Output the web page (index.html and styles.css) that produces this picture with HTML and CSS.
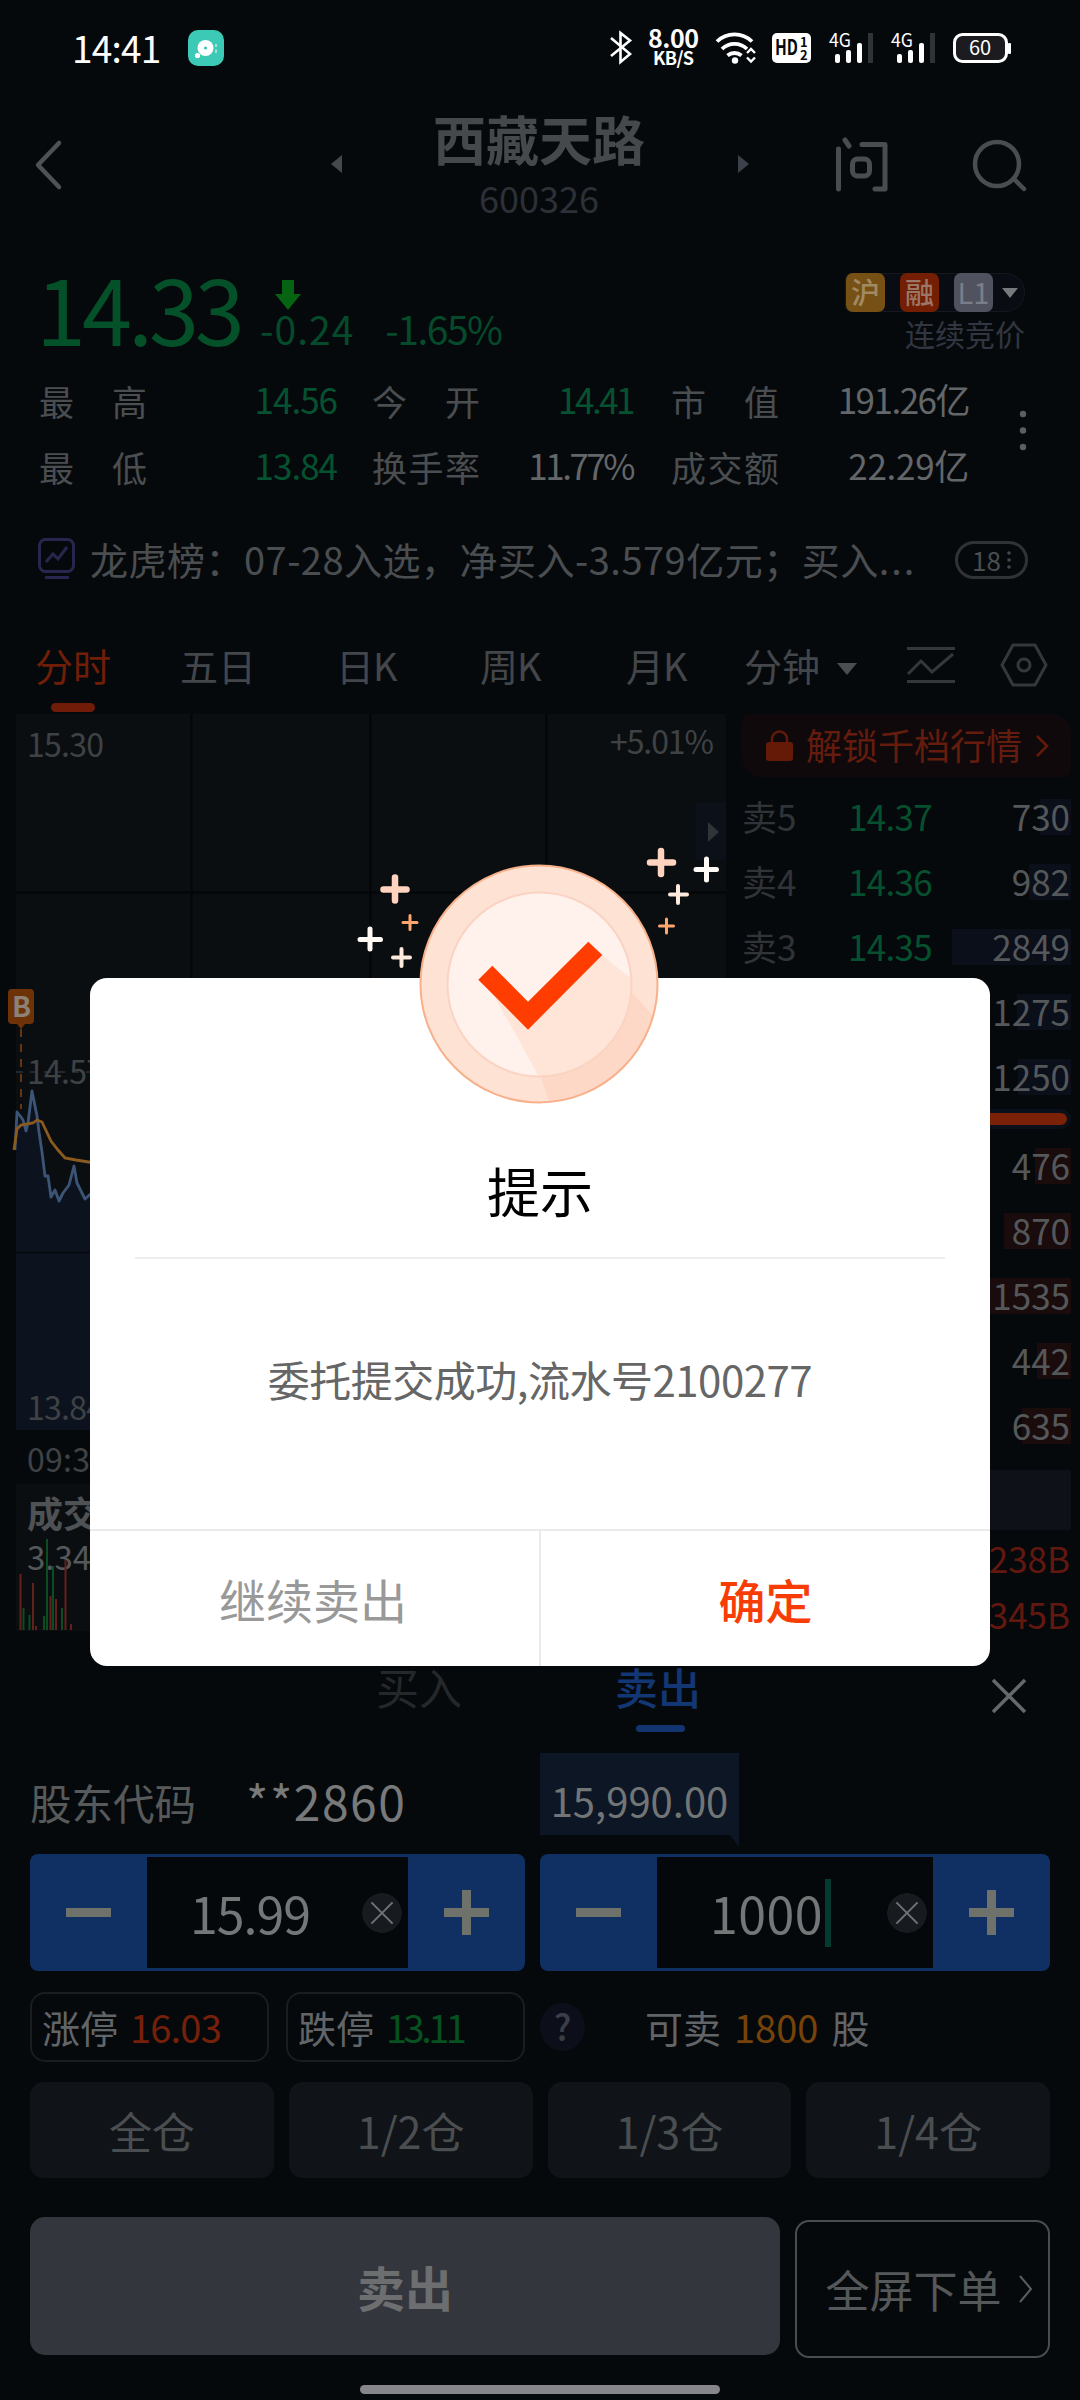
FILE: index.html
```html
<!DOCTYPE html>
<html lang="zh-CN">
<head>
<meta charset="utf-8">
<title>西藏天路 600326</title>
<link rel="stylesheet" href="styles.css">
</head>
<body>
<div class="screen">
  <header class="status">
    <div class="status-left">
      <span class="clock">14:41</span>
      <svg width="36" height="36" viewBox="0 0 36 36"><rect width="36" height="36" rx="10" fill="#3cc9b5"/><circle cx="17.500" cy="18" r="8" fill="#fff"/><circle cx="17.500" cy="18" r="1.600" fill="#3cc9b5"/><circle cx="9.500" cy="25.500" r="2.600" fill="#fff"/><path d="M28 14v3M28 19.500v3.500" stroke="#bff0e8" stroke-width="1.500"/></svg>
    </div>
    <svg class="status-icons" width="424" height="50" viewBox="0 0 424 50">
      <g fill="none" stroke="#fff" stroke-width="2.600"><path d="M3 14 22 30 12.500 38V9L22 16.500 3 32"/></g>
      <g fill="#fff">
        <text x="40" y="24" font-size="25" textLength="51" class="bold">8.00</text>
        <text x="45" y="41" font-size="18" textLength="41" class="bold">KB/S</text>
      </g>
      <g fill="none" stroke="#fff" stroke-width="3.800"><path d="M109 17.500a25 25 0 0 1 35 0"/><path d="M114 25a18 18 0 0 1 25 0"/><path d="M119.500 31.500a11 11 0 0 1 14 0"/><path d="m139 29 4-4 4 4M139 33.500l4 4 4-4" stroke-width="2.400"/></g>
      <circle cx="127" cy="36.500" r="3.200" fill="#fff"/>
      <rect x="164" y="9" width="39" height="30" rx="5" fill="#fff"/>
      <text x="167" y="31" font-size="21" textLength="23" class="bold" lengthAdjust="spacingAndGlyphs" fill="#06090c">HD</text>
      <text x="192" y="23" font-size="13" class="bold" fill="#06090c">1</text><text x="192" y="36" font-size="13" class="bold" fill="#06090c">2</text>
      <g id="sig"><text x="221" y="23" font-size="19" textLength="22" lengthAdjust="spacingAndGlyphs" fill="#fff">4G</text>
      <g fill="#fff"><rect x="227" y="30" width="5" height="9" rx="2"/><rect x="238" y="26" width="5" height="13" rx="2"/><rect x="249" y="19" width="5" height="20" rx="2"/></g><rect x="260" y="9" width="5" height="30" fill="#303234"/></g>
      <use href="#sig" x="62"/>
      <rect x="346.500" y="10.500" width="52" height="27" rx="8" fill="#1c1c20" stroke="#fff" stroke-width="3"/><rect x="400" y="19" width="3" height="11" rx="1" fill="#fff"/>
      <text x="361" y="31" font-size="20" fill="#fff">60</text>
    </svg>
  </header>

  <nav class="titlebar">
    <svg class="back" width="30" height="50" viewBox="0 0 30 50"><path d="M26 3 5 25 26 47" fill="none" stroke="#4f5254" stroke-width="4.500" stroke-linecap="round" stroke-linejoin="round"/></svg>
    <svg class="prev" width="12" height="20" viewBox="0 0 12 20"><path d="M11 1v18L0 10z" fill="#45484c"/></svg>
    <div class="name"><h1>西藏天路</h1><span>600326</span></div>
    <svg class="next" width="12" height="20" viewBox="0 0 12 20"><path d="M1 1v18l11-9z" fill="#3c4049"/></svg>
    <svg class="ask" width="54" height="58" viewBox="0 0 54 58" fill="none" stroke="#4a4d50" stroke-width="5" stroke-linecap="round"><path d="M4.500 14v40M11 5l4 6M28 9.500h23V54H41" stroke-linejoin="round"/><rect x="18.500" y="24" width="17" height="17" rx="5"/></svg>
    <svg class="search" width="56" height="56" viewBox="0 0 56 56" fill="none" stroke="#4a4d50" stroke-width="4.500" stroke-linecap="round"><circle cx="25" cy="27" r="22"/><path d="m42 42 10 10"/></svg>
  </nav>

  <section class="quote">
    <div class="price">14.33</div>
    <div class="change">
      <svg width="26" height="30" viewBox="0 0 26 30"><path d="M7 0h12v14h7L13 30 0 14h7z" fill="#066312"/></svg>
      <div class="delta"><span>-0.24</span><span>-1.65%</span></div>
    </div>
    <div class="market">
      <div class="tags"><b class="hu">沪</b><b class="rong">融</b><b class="lv">L1</b><svg width="16" height="10" viewBox="0 0 16 10"><path d="M0 0h16L8 10z" fill="#77797d"/></svg></div>
      <div class="phase">连续竞价</div>
    </div>
  </section>

  <section class="stats">
    <dl>
      <dt><i>最</i><i>高</i></dt><dd class="green">14.56</dd>
      <dt><i>今</i><i>开</i></dt><dd class="green mid tight">14.41</dd>
      <dt><i>市</i><i>值</i></dt><dd class="snug">191.26亿</dd>
      <dt><i>最</i><i>低</i></dt><dd class="green">13.84</dd>
      <dt><i>换</i><i>手</i><i>率</i></dt><dd class="mid tight">11.77%</dd>
      <dt><i>成</i><i>交</i><i>额</i></dt><dd class="wide">22.29亿</dd>
    </dl>
    <svg width="8" height="42" viewBox="0 0 8 42" fill="#5c5e60"><circle cx="4" cy="4" r="3.200"/><circle cx="4" cy="20.500" r="3.200"/><circle cx="4" cy="37" r="3.200"/></svg>
  </section>

  <section class="news">
    <svg width="38" height="42" viewBox="0 0 38 42" fill="none" stroke="#27264e" stroke-width="3"><rect x="1.500" y="1.500" width="34" height="32" rx="6"/><path d="m8 24 7-8 5 5 9-12M7 39.500h24"/></svg>
    <span class="headline">龙虎榜：07-28入选，净买入-3.579亿元；买入<span class="dots">...</span></span>
    <span class="count">18<svg width="4" height="20" viewBox="0 0 4 20" fill="#45484a"><circle cx="2" cy="3" r="1.800"/><circle cx="2" cy="10" r="1.800"/><circle cx="2" cy="17" r="1.800"/></svg></span>
  </section>

  <nav class="periods">
    <span class="on">分时</span><span>五日</span><span>日K</span><span>周K</span><span>月K</span><span>分钟</span>
    <svg class="tri" width="20" height="12" viewBox="0 0 20 12"><path d="M0 0h20L10 12z" fill="#4b4d50"/></svg>
    <svg width="50" height="40" viewBox="0 0 50 40" fill="none" stroke="#35383a" stroke-width="3"><path d="M1 3.500h48M1 36.500h48"/><path d="m2 29 13-13 11 11L47 9"/></svg>
    <svg class="hex" width="48" height="44" viewBox="0 0 48 44" fill="none" stroke="#35383a" stroke-width="3"><path d="M13 2h22l11 20-11 20H13L2 22z" stroke-linejoin="round"/><circle cx="24" cy="22" r="6"/></svg>
  </nav>

  <main class="market-view">
    <svg class="chart" width="742" height="920" viewBox="0 714 742 920">
      <rect x="16" y="714" width="710" height="716" fill="#0b0e11"/>
      <rect x="16" y="1484" width="710" height="147" fill="#0b0e11"/>
      <rect x="696" y="803" width="30" height="57" fill="#0c1018"/><path d="M708 822v20l11-10z" fill="#303439"/>
      <path d="M191.500 714v716M370.500 714v716M546.500 714v716M16 892.500h710M16 1252.500h710" stroke="#030506" stroke-width="2"/>
      <path d="M16 1072h710" stroke="#25282c" stroke-width="2" stroke-dasharray="7 7"/>
      <path d="M16 1150 17 1112 21 1117 23 1120 26 1131 28 1123 32 1091 37 1116 39 1132 42 1152 45 1176 48 1176 51 1197 55 1190 59 1201 63 1193 69 1185 74 1166 77 1183 85 1199 95 1190V1430H16z" fill="#0d131e"/>
      <path d="M16 1252.500h80" stroke="#060a10" stroke-width="2"/>
      <g fill="#3f4245" font-size="32">
        <text x="27" y="757" textLength="77">15.30</text><text x="610" y="754" textLength="104">+5.01%</text>
        <text x="27" y="1084" textLength="77">14.57</text><text x="27" y="1420" textLength="77">13.84</text><text x="27" y="1472" textLength="81">09:30</text>
      </g>
      <path d="M21 1029v80" stroke="#66350f" stroke-width="2" stroke-dasharray="8 7"/>
      <path d="M15 1150 17 1112 21 1117 23 1120 26 1131 28 1123 32 1091 37 1116 39 1132 42 1152 45 1176 48 1176 51 1197 55 1190 59 1201 63 1193 69 1185 74 1166 77 1183 85 1199 95 1190" fill="none" stroke="#3c5577" stroke-width="2.800" stroke-linejoin="round"/>
      <path d="M14 1150 17 1129 21 1125 33 1123 37 1120 42 1122 51 1141 58 1150 65 1158 76 1160 95 1163" fill="none" stroke="#8a5a1e" stroke-width="2.800"/>
      <path d="M12 989h18q4 0 4 4v27q0 4-4 4h-5l-4 5-4-5h-5q-4 0-4-4v-27q0-4 4-4z" fill="#6d3208"/>
      <text x="12" y="1017" font-size="28" class="bold" fill="#8c8177">B</text>
      <text x="27" y="1528" font-size="36" class="bold" fill="#4f5254">成交量</text>
      <text x="27" y="1570" font-size="33" fill="#55585a">3.34万</text>
      <path d="M20.500 1574v56M33 1583v47M36 1626v4M50.500 1596v34M56 1599v31M65.500 1560v70M71 1624v6" stroke="#64201b" stroke-width="2"/>
      <path d="M23.500 1608v22M29.500 1615v15M44 1616v14M47 1539v91M53 1566v64M62 1608v22" stroke="#0b4c22" stroke-width="2"/>
    </svg>
    <aside class="book">
      <div class="unlock"><svg width="27" height="32" viewBox="0 0 27 32"><path d="M6 14V9a7.500 7.500 0 0 1 15 0v5" fill="none" stroke="#5f1a0b" stroke-width="2.500"/><rect y="12" width="27" height="19" rx="3" fill="#651a08"/></svg><span>解锁千档行情</span><svg width="14" height="24" viewBox="0 0 14 24"><path d="m2 2 10 10L2 22" fill="none" stroke="#651a08" stroke-width="2.500"/></svg></div>
      <ul class="sell">
        <li><span>卖5</span><em>14.37</em><b style="--w:31px">730</b></li>
        <li><span>卖4</span><em>14.36</em><b style="--w:42px">982</b></li>
        <li><span>卖3</span><em>14.35</em><b style="--w:119px">2849</b></li>
        <li><b style="--w:54px">1275</b></li>
        <li><b style="--w:53px">1250</b></li>
      </ul>
      <div class="ratio"></div>
      <ul class="buy">
        <li><b style="--w:36px">476</b></li>
        <li><b style="--w:67px">870</b></li>
        <li><b style="--w:81px">1535</b></li>
        <li><b style="--w:34px">442</b></li>
        <li><b style="--w:49px">635</b></li>
      </ul>
      <div class="book-tab"></div>
      <div class="tick">238B</div><div class="tick">345B</div>
    </aside>
  </main>

  <section class="trade">
    <div class="sides"><span class="side">买入</span><span class="side active">卖出</span>
      <svg width="36" height="36" viewBox="0 0 36 36"><path d="m2 2 32 32M34 2 2 34" stroke="#66696b" stroke-width="3.500"/></svg></div>
    <div class="account"><span class="label">股东代码</span><span class="code">**2860</span><span class="amount">15,990.00</span></div>
    <div class="inputs">
      <div class="stepper"><button class="minus"></button><div class="field">15.99</div><i class="clear"></i><button class="plus"></button></div>
      <div class="stepper"><button class="minus"></button><div class="field qty">1000<i class="caret"></i></div><i class="clear"></i><button class="plus"></button></div>
    </div>
    <div class="limits">
      <div class="limit">涨停<span class="up">16.03</span></div>
      <div class="limit">跌停<span class="down">13.11</span></div>
      <i class="help">?</i>
      <div class="avail">可卖<span>1800</span>股</div>
    </div>
    <div class="portions"><button>全仓</button><button>1/2仓</button><button>1/3仓</button><button>1/4仓</button></div>
    <div class="submit"><button class="go">卖出</button><button class="full">全屏下单<svg width="14" height="28" viewBox="0 0 14 28"><path d="m1 1 11 13L1 27" fill="none" stroke="#5a5d5f" stroke-width="2"/></svg></button></div>
    <div class="home"></div>
  </section>

  <div class="dialog">
    <h2>提示</h2>
    <p>委托提交成功,流水号2100277</p>
    <div class="actions"><button>继续卖出</button><button class="ok">确定</button></div>
    <svg class="badge" width="400" height="300" viewBox="0 0 400 300">
      <defs><clipPath id="outer"><circle cx="199" cy="164" r="118.500"/></clipPath><clipPath id="inner"><circle cx="199.500" cy="164.500" r="92"/></clipPath></defs>
      <circle cx="199" cy="164" r="118.500" fill="#fee2d3"/>
      <path clip-path="url(#outer)" d="M188 209 201 258 216 300 330 300V215L290 170z" fill="#fdd8c6"/>
      <circle cx="199.500" cy="164.500" r="92" fill="#fff2ed"/>
      <path clip-path="url(#inner)" d="M154 176 176 215 206 270 330 260V190L262 135 188 209z" fill="#fee5d7"/>
      <path clip-path="url(#inner)" d="M154 176 165 200 206 270 100 270V150z" fill="#fff2ed"/>
      <circle cx="199.500" cy="164.500" r="92" fill="none" stroke="#fbd3c3" stroke-width="2"/>
      <circle cx="199" cy="164" r="118.500" fill="none" stroke="#f7b08a" stroke-width="2"/>
      <path d="m138.300 159.700 14-14 35.700 36 60.300-60 14 13.300L188 209.700z" fill="#ff3d00"/>
      <g fill="none" stroke-linecap="round">
        <path d="M55 57.500v23M43.500 69.500h23M321 31v23M310 42.500h23" stroke="#ffd3bd" stroke-width="6.500"/>
        <path d="M30 109v20M20 119.500h20.500M366.500 39v21M356 49.500h20.500" stroke="#fffaf5" stroke-width="5"/>
        <path d="M61.500 129v17M53 137.500h17M338 66v17M330 74.500h17" stroke="#ffe8dc" stroke-width="4"/>
        <path d="M70 95.500v14M63 102.500h14M326.500 99v14M319.500 106h14" stroke="#ffa56e" stroke-width="3"/>
      </g>
    </svg>
  </div>
</div>
</body>
</html>
```
FILE: styles.css
```css
* { box-sizing: border-box; margin: 0; padding: 0; }
body { background: #06090c; }
i, em { font-style: normal; }
ul { list-style: none; }
svg { display: block; flex: none; overflow: visible; }
button { border: 0; background: none; color: inherit; font: inherit; }
.bold { font-weight: 700; }
.screen {
  position: relative; width: 1080px; height: 2400px; overflow: hidden;
  display: flex; flex-direction: column;
  background: #06090c; color: #4b4e51;
  font-family: "Noto Sans CJK SC", sans-serif; line-height: 1; white-space: nowrap;
}

/* status bar */
.status { height: 95px; padding: 0 48px 0 72px; display: flex; justify-content: space-between; align-items: center; }
.status-left { display: flex; align-items: center; gap: 28px; }
.clock { color: #fff; font-size: 37px; line-height: 40px; letter-spacing: -.8px; margin-top: -2px; }
.status-icons { margin-top: 3px; }

/* title bar */
.titlebar { height: 165px; display: flex; align-items: flex-start; }
.back { margin: 45px 0 0 33px; }
.prev { margin: 59px 0 0 268px; }
.name { width: 212px; margin: 16px 92px 0 90px; display: flex; flex-direction: column; align-items: center; gap: 13px; }
.name h1 { font-size: 53px; font-weight: 700; line-height: 55px; color: #46494b; }
.name span { font-size: 36px; line-height: 36px; color: #2d3036; }
.next { margin-top: 59px; }
.ask { margin: 40px 0 0 85px; }
.search { margin: 42px 0 0 84px; }

/* price */
.quote { height: 106px; padding: 0 55px 0 36px; display: flex; }
.price { width: 208px; padding-top: 2px; font-size: 90px; letter-spacing: -4px; color: #045029; }
.change { margin-left: 16px; padding-top: 20px; display: flex; flex-direction: column; }
.change > svg { margin-left: 15px; }
.delta { margin-top: -3px; display: flex; gap: 31px; font-size: 39px; line-height: 42px; color: #054a2a; }
.delta span:first-child { letter-spacing: 1px; }
.delta span:last-child { letter-spacing: -1.500px; }
.market { margin-left: auto; padding-top: 13px; display: flex; flex-direction: column; align-items: flex-end; gap: 6px; }
.tags { height: 39px; padding-right: 6px; display: flex; align-items: center; gap: 15px; border: 1px solid #15181d; border-radius: 6px 20px 20px 6px; background: #090c12; }
.tags b { width: 39px; height: 39px; border-radius: 7px; text-align: center; font-size: 29px; line-height: 36px; font-weight: 500; }
.tags svg { margin-left: -6px; }
.tags .hu { background: #775015; color: #a18a62; }
.tags .rong { background: #741e03; color: #9b7767; }
.tags .lv { background: #50525f; color: #7b7e89; font-weight: 400; }
.phase { font-size: 30px; color: #313640; }

/* figures */
.stats { height: 146px; padding: 0 53px 0 39px; display: flex; justify-content: space-between; }
.stats dl { width: 930px; padding-top: 1px; display: grid; grid-template-columns: 108px 190px 143px 153px 165px 171px; grid-auto-rows: 66px; align-items: center; }
.stats dt { display: flex; justify-content: space-between; font-size: 35px; }
.stats dt:nth-of-type(3n+2) { margin-left: 35px; width: 108px; }
.stats dt:nth-of-type(3n) { margin-left: 38px; width: 108px; }
.stats dd { text-align: right; font-size: 35px; letter-spacing: -1px; color: #646769; margin-top: -4px; }
.stats .green { color: #055231; letter-spacing: -1px; }
.stats .tight, .stats .green.tight { letter-spacing: -2.500px; }
.stats .snug { letter-spacing: -1.500px; }
.stats .wide { letter-spacing: -.3px; }
.stats > svg { margin-top: 44px; }

/* news */
.news { height: 100px; padding: 0 52px 6px 38px; display: flex; align-items: center; }
.headline { width: 879px; padding-left: 14px; font-size: 38px; letter-spacing: .5px; line-height: 48px; }
.dots { letter-spacing: 2px; }
.count { margin-top: 2px; width: 73px; height: 38px; display: flex; align-items: center; justify-content: center; gap: 6px; border: 3px solid #303335; border-radius: 19px; font-size: 26px; }

/* periods */
.periods { height: 102px; padding: 2px 32px 0 35px; display: flex; align-items: center; font-size: 38px; color: #43464a; border-top: 1px solid #080b0e; }
.periods span { width: 145px; line-height: 99px; height: 99px; position: relative; }
.periods span:nth-of-type(2) { width: 156px; }
.periods span:nth-of-type(3) { width: 144px; letter-spacing: -1px; }
.periods span:nth-of-type(4) { width: 146px; letter-spacing: -1px; }
.periods span:nth-of-type(5) { width: 118px; letter-spacing: -1px; }
.periods span:nth-of-type(6) { width: 92px; }
.periods .on { color: #701e08; }
.periods .on::after { content: ""; position: absolute; left: 16px; bottom: 2px; width: 44px; height: 9px; border-radius: 5px; background: #701c08; }
.periods .tri { margin: 8px 49px 0 1px; }
.periods .hex { margin-left: auto; }

/* chart and order book */
.market-view { height: 935px; display: flex; align-items: flex-start; }
.book { width: 329px; }
.unlock { height: 63px; padding-left: 24px; display: flex; align-items: center; gap: 13px; border-radius: 8px 20px 8px 20px; background: #10090c; color: #651c0d; font-size: 36px; }
.unlock span { line-height: 50px; margin-top: -3px; }
.book li { height: 65px; display: grid; grid-template-columns: 106px 1fr 90px; align-items: center; font-size: 35px; }
.sell { padding-top: 6px; }
.book li span { color: #303337; }
.book li em { color: #05502e; letter-spacing: -.7px; }
.book b { grid-column: 3; position: relative; padding-right: 1px; text-align: right; line-height: 36px; font-size: 35px; font-weight: 400; color: #55585a; z-index: 0; }
.book b::before { content: ""; position: absolute; z-index: -1; right: 0; top: 1px; width: var(--w); height: 36px; background: #0a0f19; }
.buy b::before { background: #1a0c0c; }
.ratio { height: 20px; margin-top: 1px; border: 4px solid #0a1019; border-radius: 11px; background: #7a2107; }
.buy { padding-top: 3px; }
.book-tab { height: 60px; margin-top: 13px; background: #0e1117; }
.tick { height: 56px; padding-right: 1px; text-align: right; line-height: 56px; font-size: 35px; color: #63180f; }

/* order ticket */
.trade { height: 751px; padding: 0 30px; }
.sides { height: 104px; display: flex; align-items: flex-start; font-size: 43px; }
.side { width: 239px; padding-top: 12px; line-height: 50px; color: #25282b; }
.side:first-child { margin-left: 346px; }
.side.active { color: #133774; font-weight: 500; width: 90px; position: relative; }
.side.active::after { content: ""; position: absolute; left: 21px; top: 76px; width: 49px; height: 7px; border-radius: 4px; background: #12356f; }
.sides svg { margin: 29px 0 0 286px; }
.account { height: 101px; display: flex; align-items: flex-start; }
.label { width: 216px; font-size: 41.500px; line-height: 98px; color: #565a5b; }
.code { width: 294px; font-size: 48px; line-height: 94px; letter-spacing: 1.500px; color: #77797a; }
.amount { position: relative; width: 199px; height: 82px; text-align: center; line-height: 94px; font-size: 40px; background: #0d1625; color: #727576; }
.amount::after { content: ""; position: absolute; right: 0; top: 82px; border-top: 12px solid #0d1625; border-left: 9px solid transparent; }
.inputs { height: 117px; display: flex; gap: 15px; }
.stepper { flex: 0 0 495px; display: flex; align-items: center; padding: 3px 0; border-radius: 8px; background: #103064; }
.stepper:last-child { flex-basis: 510px; }
.minus, .plus { width: 117px; height: 111px; background: linear-gradient(#6e726b, #6e726b) center/45px 9px no-repeat; }
.plus { background: linear-gradient(#6e726b, #6e726b) center/45px 9px no-repeat, linear-gradient(#6e726b, #6e726b) center/9px 45px no-repeat; }
.field { flex: 1; height: 111px; padding: 0 0 2px 43px; display: flex; align-items: center; background: #05080b; font-size: 50px; letter-spacing: -1px; color: #747778; }
.field.qty { padding-left: 53px; letter-spacing: .5px; }
.caret { width: 6px; height: 68px; margin: 2px 0 0 2px; background: #043b30; }
.clear { width: 46px; height: 111px; flex: none; background:
  radial-gradient(circle at 20px 56px, transparent 19.500px, #05080b 20px),
  #171a1f; position: relative; }
.clear::before, .clear::after { content: ""; position: absolute; left: 5px; top: 55px; width: 30px; height: 2px; background: #707375; transform: rotate(45deg); }
.clear::after { transform: rotate(-45deg); }
.limits { height: 111px; padding: 21px 0; display: flex; align-items: center; font-size: 38px; color: #626568; }
.limit { width: 239px; height: 70px; margin-right: 17px; padding: 0 10px; display: flex; align-items: center; gap: 12px; border: 2px solid #1a1d20; border-radius: 15px; }
.limit + .limit { margin-right: 15px; }
.limit span { letter-spacing: -.8px; }
.limit .up { color: #76200a; }
.limit .down { color: #07501f; letter-spacing: -3.500px; }
.help { width: 45px; height: 48px; border-radius: 50%; background: #0c0f1a; text-align: center; line-height: 44px; font-size: 36px; font-weight: 500; color: #3b3e47; }
.avail { margin-left: 60px; display: flex; gap: 13px; }
.avail span { color: #77430b; }
.portions { height: 96px; display: grid; grid-template-columns: repeat(4, 1fr); gap: 15px; font-size: 43px; color: #4b4e50; }
.portions button { border-radius: 14px; background: #101418; }
.submit { height: 180px; padding-top: 39px; display: flex; gap: 15px; }
.go { width: 750px; height: 138px; border-radius: 15px; background: #34363e; color: #6d6e70; font-size: 48px; font-weight: 700; }
.full { width: 255px; height: 138px; margin-top: 3px; padding: 0 0 0 13px; display: flex; align-items: center; justify-content: center; gap: 17px; border: 2px solid #4a4d4f; border-radius: 14px; font-size: 44px; color: #55585a; }
.home { width: 360px; height: 9px; margin: 27px auto 0; border-radius: 5px; background: #87868a; }

/* dialog */
.dialog { position: absolute; left: 90px; top: 978px; width: 900px; height: 688px; border-radius: 17px; background: #fff; display: flex; flex-direction: column; text-align: center; }
.dialog h2 { height: 281px; margin: 0 45px; padding-top: 186px; border-bottom: 2px solid #eee; font-size: 53px; font-weight: 400; color: #000; }
.dialog p { height: 270px; padding-top: 99px; font-size: 42px; letter-spacing: -.5px; color: #666; }
.actions { flex: 1; display: grid; grid-template-columns: 449px 1fr; border-top: 2px solid #ebebeb; font-size: 47px; color: #999; }
.actions button { padding-right: 3px; }
.actions .ok { padding-right: 0; border-left: 2px solid #ebebeb; color: #f83c05; font-weight: 500; }
.badge { position: absolute; left: 250px; top: -158px; }
```
